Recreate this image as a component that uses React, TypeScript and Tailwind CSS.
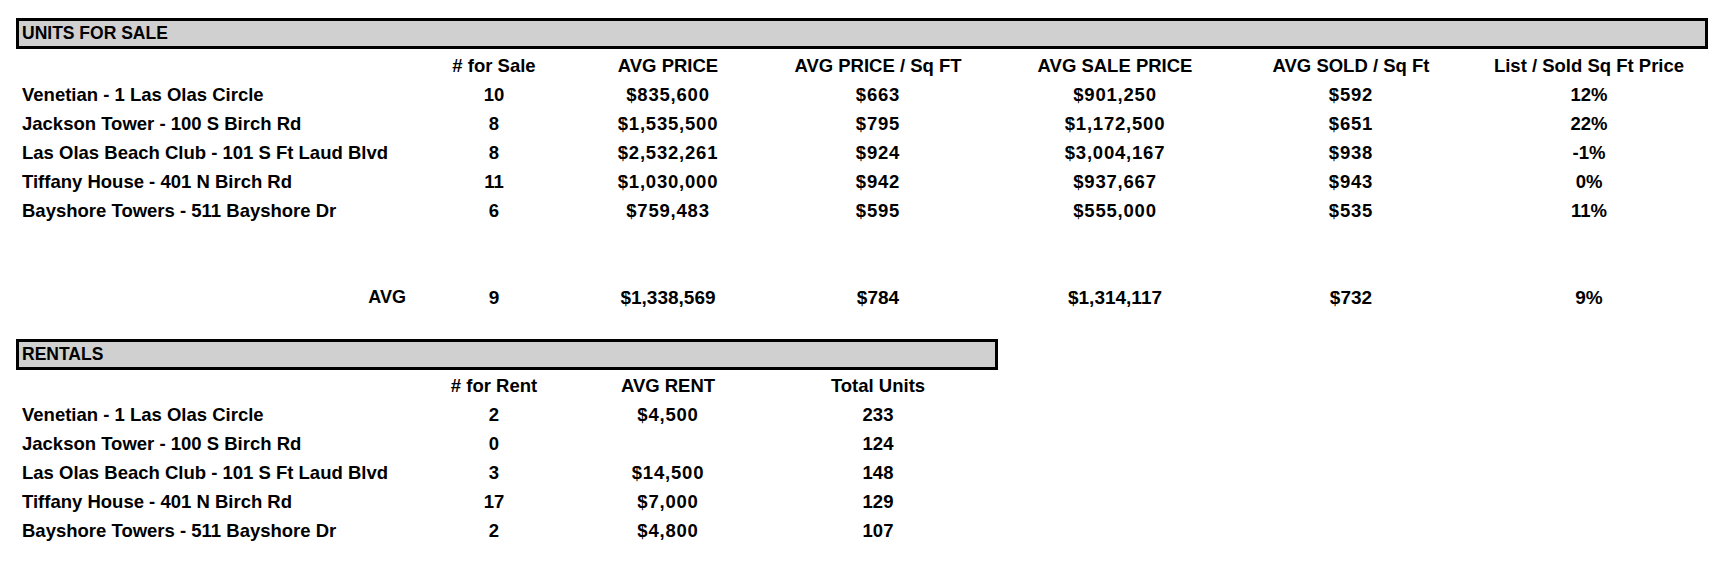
import React from "react";

const cols = "grid grid-cols-[394px_168px_180px_240px_234px_238px_238px]";
const rcols = "grid grid-cols-[394px_168px_180px_240px]";

const sale = [
  ["Venetian - 1 Las Olas Circle", "10", "$835,600", "$663", "$901,250", "$592", "12%"],
  ["Jackson Tower - 100 S Birch Rd", "8", "$1,535,500", "$795", "$1,172,500", "$651", "22%"],
  ["Las Olas Beach Club - 101 S Ft Laud Blvd", "8", "$2,532,261", "$924", "$3,004,167", "$938", "-1%"],
  ["Tiffany House - 401 N Birch Rd", "11", "$1,030,000", "$942", "$937,667", "$943", "0%"],
  ["Bayshore Towers - 511 Bayshore Dr", "6", "$759,483", "$595", "$555,000", "$535", "11%"],
];

const rent = [
  ["Venetian - 1 Las Olas Circle", "2", "$4,500", "233"],
  ["Jackson Tower - 100 S Birch Rd", "0", "", "124"],
  ["Las Olas Beach Club - 101 S Ft Laud Blvd", "3", "$14,500", "148"],
  ["Tiffany House - 401 N Birch Rd", "17", "$7,000", "129"],
  ["Bayshore Towers - 511 Bayshore Dr", "2", "$4,800", "107"],
];

function Row({ cells, grid, head }: { cells: string[]; grid: string; head?: boolean }) {
  return (
    <div className={`${grid} h-[29px] leading-[29px]`}>
      {cells.map((c, i) =>
        i === 0 ? (
          <div key={i} className="pl-[6px] whitespace-nowrap">{c}</div>
        ) : (
          <div
            key={i}
            className={`text-center whitespace-nowrap ${!head && c.startsWith("$") ? "tracking-[0.8px]" : ""}`}
          >
            {c}
          </div>
        )
      )}
    </div>
  );
}

export default function App() {
  return (
    <div
      className="w-[1726px] h-[564px] bg-white text-black font-bold text-[18.5px] pt-[18px] pl-[16px] overflow-hidden"
      style={{ fontFamily: '"Liberation Sans", Arial, sans-serif' }}
    >
      <div className="w-[1692px] h-[31px] border-[3px] border-black bg-[#d0d0d0] flex items-center pl-[3px] text-[17.5px]">
        UNITS FOR SALE
      </div>
      <div className="mt-[2px]">
        <Row head grid={cols} cells={["", "# for Sale", "AVG PRICE", "AVG PRICE / Sq FT", "AVG SALE PRICE", "AVG SOLD / Sq Ft", "List / Sold Sq Ft Price"]} />
        {sale.map((r, i) => (
          <Row key={i} grid={cols} cells={r} />
        ))}
        <div className="h-[58px]" />
        <div className={`${cols} h-[29px] leading-[29px] text-[19px]`}>
          <div className="text-right pr-[4px] text-[18px]">AVG</div>
          <div className="text-center">9</div>
          <div className="text-center">$1,338,569</div>
          <div className="text-center">$784</div>
          <div className="text-center">$1,314,117</div>
          <div className="text-center">$732</div>
          <div className="text-center">9%</div>
        </div>
      </div>
      <div className="mt-[27px] w-[982px] h-[31px] border-[3px] border-black bg-[#d0d0d0] flex items-center pl-[3px] text-[17.5px]">
        RENTALS
      </div>
      <div className="mt-[1px]">
        <Row head grid={rcols} cells={["", "# for Rent", "AVG RENT", "Total Units"]} />
        {rent.map((r, i) => (
          <Row key={i} grid={rcols} cells={r} />
        ))}
      </div>
    </div>
  );
}
